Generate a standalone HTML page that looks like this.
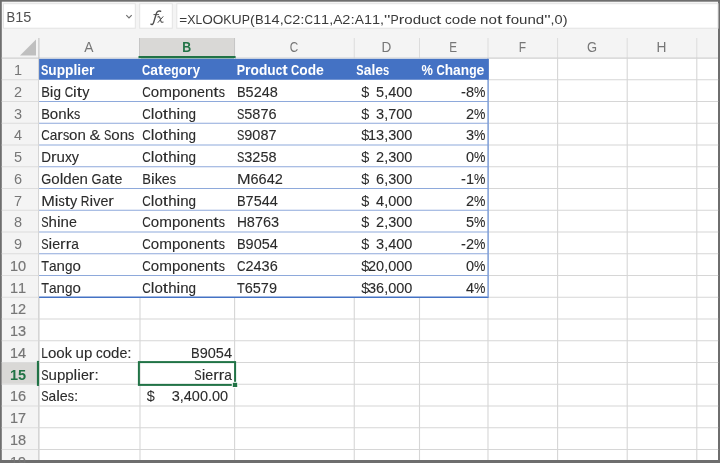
<!DOCTYPE html>
<html><head><meta charset="utf-8"><style>
html,body{margin:0;padding:0;width:720px;height:463px;overflow:hidden;background:#6e6e6e;font-family:"Liberation Sans",sans-serif}
text{white-space:pre}
</style></head><body>
<svg width="720" height="463" viewBox="0 0 720 463" style="position:absolute;left:0;top:0;display:block;will-change:transform"><rect x="0" y="0" width="720" height="463" fill="#6e6e6e"/><rect x="1.8" y="1.7" width="716.2" height="458.3" fill="#f4f4f4"/><rect x="3.5" y="3.7" width="131.8" height="24.5" fill="#fff" stroke="#e3e3e3" stroke-width="1"/><rect x="139.7" y="3.7" width="32.60000000000002" height="24.5" fill="#fff" stroke="#e3e3e3" stroke-width="1"/><rect x="176.8" y="3.7" width="541.2" height="24.5" fill="#fff" stroke="#e3e3e3" stroke-width="1"/><path d="M126.3 15.2 L129 17.9 L131.7 15.2" fill="none" stroke="#707070" stroke-width="1.2"/><rect x="38.9" y="58.0" width="679.1" height="402.0" fill="#fff"/><line x1="140.0" y1="38" x2="140.0" y2="58.0" stroke="#dcdcdc" stroke-width="1"/><line x1="234.6" y1="38" x2="234.6" y2="58.0" stroke="#dcdcdc" stroke-width="1"/><line x1="354.25" y1="38" x2="354.25" y2="58.0" stroke="#dcdcdc" stroke-width="1"/><line x1="419.5" y1="38" x2="419.5" y2="58.0" stroke="#dcdcdc" stroke-width="1"/><line x1="488.0" y1="38" x2="488.0" y2="58.0" stroke="#dcdcdc" stroke-width="1"/><line x1="557.6" y1="38" x2="557.6" y2="58.0" stroke="#dcdcdc" stroke-width="1"/><line x1="627.2" y1="38" x2="627.2" y2="58.0" stroke="#dcdcdc" stroke-width="1"/><line x1="696.8" y1="38" x2="696.8" y2="58.0" stroke="#dcdcdc" stroke-width="1"/><rect x="139.0" y="38" width="96.0" height="20.0" fill="#d9d8d6"/><line x1="139.5" y1="38" x2="139.5" y2="58.0" stroke="#c6c6c6" stroke-width="1"/><line x1="234.5" y1="38" x2="234.5" y2="58.0" stroke="#c6c6c6" stroke-width="1"/><line x1="1.7" y1="58.1" x2="718" y2="58.1" stroke="#d0d0d0" stroke-width="1.1"/><rect x="138.5" y="56.0" width="97.1" height="2.6" fill="#217346"/><path d="M20 55.5 L36 55.5 L36 39.5 Z" fill="#bfbfbf"/><line x1="38.9" y1="38" x2="38.9" y2="460" stroke="#c4c4c4" stroke-width="1.1"/><line x1="1.7" y1="79.75" x2="38.4" y2="79.75" stroke="#dcdcdc" stroke-width="1"/><line x1="1.7" y1="101.5" x2="38.4" y2="101.5" stroke="#dcdcdc" stroke-width="1"/><line x1="1.7" y1="123.25" x2="38.4" y2="123.25" stroke="#dcdcdc" stroke-width="1"/><line x1="1.7" y1="145.0" x2="38.4" y2="145.0" stroke="#dcdcdc" stroke-width="1"/><line x1="1.7" y1="166.75" x2="38.4" y2="166.75" stroke="#dcdcdc" stroke-width="1"/><line x1="1.7" y1="188.5" x2="38.4" y2="188.5" stroke="#dcdcdc" stroke-width="1"/><line x1="1.7" y1="210.25" x2="38.4" y2="210.25" stroke="#dcdcdc" stroke-width="1"/><line x1="1.7" y1="232.0" x2="38.4" y2="232.0" stroke="#dcdcdc" stroke-width="1"/><line x1="1.7" y1="253.75" x2="38.4" y2="253.75" stroke="#dcdcdc" stroke-width="1"/><line x1="1.7" y1="275.5" x2="38.4" y2="275.5" stroke="#dcdcdc" stroke-width="1"/><line x1="1.7" y1="297.25" x2="38.4" y2="297.25" stroke="#dcdcdc" stroke-width="1"/><line x1="1.7" y1="319.0" x2="38.4" y2="319.0" stroke="#dcdcdc" stroke-width="1"/><line x1="1.7" y1="340.75" x2="38.4" y2="340.75" stroke="#dcdcdc" stroke-width="1"/><line x1="1.7" y1="362.5" x2="38.4" y2="362.5" stroke="#dcdcdc" stroke-width="1"/><line x1="1.7" y1="384.25" x2="38.4" y2="384.25" stroke="#dcdcdc" stroke-width="1"/><line x1="1.7" y1="406.0" x2="38.4" y2="406.0" stroke="#dcdcdc" stroke-width="1"/><line x1="1.7" y1="427.75" x2="38.4" y2="427.75" stroke="#dcdcdc" stroke-width="1"/><line x1="1.7" y1="449.5" x2="38.4" y2="449.5" stroke="#dcdcdc" stroke-width="1"/><line x1="1.7" y1="471.25" x2="38.4" y2="471.25" stroke="#dcdcdc" stroke-width="1"/><rect x="1.8" y="363.0" width="36.6" height="20.75" fill="#d9d8d6"/><rect x="36.9" y="360.9" width="2.2" height="25" fill="#217346"/><line x1="38.9" y1="79.75" x2="718.2" y2="79.75" stroke="#d6d6d6" stroke-width="1.1"/><line x1="38.9" y1="101.5" x2="718.2" y2="101.5" stroke="#d6d6d6" stroke-width="1.1"/><line x1="38.9" y1="123.25" x2="718.2" y2="123.25" stroke="#d6d6d6" stroke-width="1.1"/><line x1="38.9" y1="145.0" x2="718.2" y2="145.0" stroke="#d6d6d6" stroke-width="1.1"/><line x1="38.9" y1="166.75" x2="718.2" y2="166.75" stroke="#d6d6d6" stroke-width="1.1"/><line x1="38.9" y1="188.5" x2="718.2" y2="188.5" stroke="#d6d6d6" stroke-width="1.1"/><line x1="38.9" y1="210.25" x2="718.2" y2="210.25" stroke="#d6d6d6" stroke-width="1.1"/><line x1="38.9" y1="232.0" x2="718.2" y2="232.0" stroke="#d6d6d6" stroke-width="1.1"/><line x1="38.9" y1="253.75" x2="718.2" y2="253.75" stroke="#d6d6d6" stroke-width="1.1"/><line x1="38.9" y1="275.5" x2="718.2" y2="275.5" stroke="#d6d6d6" stroke-width="1.1"/><line x1="38.9" y1="297.25" x2="718.2" y2="297.25" stroke="#d6d6d6" stroke-width="1.1"/><line x1="38.9" y1="319.0" x2="718.2" y2="319.0" stroke="#d6d6d6" stroke-width="1.1"/><line x1="38.9" y1="340.75" x2="718.2" y2="340.75" stroke="#d6d6d6" stroke-width="1.1"/><line x1="38.9" y1="362.5" x2="718.2" y2="362.5" stroke="#d6d6d6" stroke-width="1.1"/><line x1="38.9" y1="384.25" x2="718.2" y2="384.25" stroke="#d6d6d6" stroke-width="1.1"/><line x1="38.9" y1="406.0" x2="718.2" y2="406.0" stroke="#d6d6d6" stroke-width="1.1"/><line x1="38.9" y1="427.75" x2="718.2" y2="427.75" stroke="#d6d6d6" stroke-width="1.1"/><line x1="38.9" y1="449.5" x2="718.2" y2="449.5" stroke="#d6d6d6" stroke-width="1.1"/><line x1="38.9" y1="471.25" x2="718.2" y2="471.25" stroke="#d6d6d6" stroke-width="1.1"/><line x1="140.0" y1="58.0" x2="140.0" y2="460" stroke="#d6d6d6" stroke-width="1.1"/><line x1="234.6" y1="58.0" x2="234.6" y2="460" stroke="#d6d6d6" stroke-width="1.1"/><line x1="354.25" y1="58.0" x2="354.25" y2="460" stroke="#d6d6d6" stroke-width="1.1"/><line x1="419.5" y1="58.0" x2="419.5" y2="460" stroke="#d6d6d6" stroke-width="1.1"/><line x1="488.0" y1="58.0" x2="488.0" y2="460" stroke="#d6d6d6" stroke-width="1.1"/><line x1="557.6" y1="58.0" x2="557.6" y2="460" stroke="#d6d6d6" stroke-width="1.1"/><line x1="627.2" y1="58.0" x2="627.2" y2="460" stroke="#d6d6d6" stroke-width="1.1"/><line x1="696.8" y1="58.0" x2="696.8" y2="460" stroke="#d6d6d6" stroke-width="1.1"/><rect x="39.1" y="58.6" width="448.90000000000003" height="238.65" fill="#fff"/><rect x="39.1" y="58.8" width="448.90000000000003" height="20.95" fill="#4472c4"/><line x1="39.1" y1="101.5" x2="488.0" y2="101.5" stroke="#8ea9db" stroke-width="1.1"/><line x1="39.1" y1="123.25" x2="488.0" y2="123.25" stroke="#8ea9db" stroke-width="1.1"/><line x1="39.1" y1="145.0" x2="488.0" y2="145.0" stroke="#8ea9db" stroke-width="1.1"/><line x1="39.1" y1="166.75" x2="488.0" y2="166.75" stroke="#8ea9db" stroke-width="1.1"/><line x1="39.1" y1="188.5" x2="488.0" y2="188.5" stroke="#8ea9db" stroke-width="1.1"/><line x1="39.1" y1="210.25" x2="488.0" y2="210.25" stroke="#8ea9db" stroke-width="1.1"/><line x1="39.1" y1="232.0" x2="488.0" y2="232.0" stroke="#8ea9db" stroke-width="1.1"/><line x1="39.1" y1="253.75" x2="488.0" y2="253.75" stroke="#8ea9db" stroke-width="1.1"/><line x1="39.1" y1="275.5" x2="488.0" y2="275.5" stroke="#8ea9db" stroke-width="1.1"/><line x1="39.1" y1="297.25" x2="488.6" y2="297.25" stroke="#4472c4" stroke-width="1.3"/><line x1="488.1" y1="79.75" x2="488.1" y2="297.25" stroke="#7f9fd8" stroke-width="1.5"/><rect x="487.0" y="58.8" width="1.85" height="20.95" fill="#4472c4"/><rect x="138.9" y="362.1" width="96.19999999999999" height="22.799999999999955" fill="none" stroke="#217346" stroke-width="2"/><rect x="231.8" y="381.8" width="6.4" height="6.2" fill="#fff"/><rect x="232.8" y="382.8" width="4.4" height="4.2" fill="#217346"/><g font-family="Liberation Sans" font-size="14.4" font-weight="700" fill="#fff"><text x="41.00" y="74.85" textLength="7.37" lengthAdjust="spacingAndGlyphs">S</text><text x="48.37" y="74.85" textLength="8.37" lengthAdjust="spacingAndGlyphs">u</text><text x="56.74" y="74.85" textLength="8.37" lengthAdjust="spacingAndGlyphs">p</text><text x="65.11" y="74.85" textLength="8.37" lengthAdjust="spacingAndGlyphs">p</text><text x="73.47" y="74.85" textLength="3.83" lengthAdjust="spacingAndGlyphs">l</text><text x="77.30" y="74.85" textLength="3.83" lengthAdjust="spacingAndGlyphs">i</text><text x="81.13" y="74.85" textLength="7.85" lengthAdjust="spacingAndGlyphs">e</text><text x="88.98" y="74.85" textLength="5.54" lengthAdjust="spacingAndGlyphs">r</text></g><g font-family="Liberation Sans" font-size="14.4" font-weight="700" fill="#fff"><text x="142.10" y="74.85" textLength="8.25" lengthAdjust="spacingAndGlyphs">C</text><text x="150.35" y="74.85" textLength="7.70" lengthAdjust="spacingAndGlyphs">a</text><text x="158.05" y="74.85" textLength="5.41" lengthAdjust="spacingAndGlyphs">t</text><text x="163.46" y="74.85" textLength="7.85" lengthAdjust="spacingAndGlyphs">e</text><text x="171.31" y="74.85" textLength="7.39" lengthAdjust="spacingAndGlyphs">g</text><text x="178.70" y="74.85" textLength="8.38" lengthAdjust="spacingAndGlyphs">o</text><text x="187.08" y="74.85" textLength="5.54" lengthAdjust="spacingAndGlyphs">r</text><text x="192.63" y="74.85" textLength="7.39" lengthAdjust="spacingAndGlyphs">y</text></g><g font-family="Liberation Sans" font-size="14.4" font-weight="700" fill="#fff"><text x="236.70" y="74.85" textLength="8.30" lengthAdjust="spacingAndGlyphs">P</text><text x="245.00" y="74.85" textLength="5.54" lengthAdjust="spacingAndGlyphs">r</text><text x="250.54" y="74.85" textLength="8.38" lengthAdjust="spacingAndGlyphs">o</text><text x="258.93" y="74.85" textLength="8.37" lengthAdjust="spacingAndGlyphs">d</text><text x="267.29" y="74.85" textLength="8.37" lengthAdjust="spacingAndGlyphs">u</text><text x="275.66" y="74.85" textLength="6.53" lengthAdjust="spacingAndGlyphs">c</text><text x="282.19" y="74.85" textLength="5.41" lengthAdjust="spacingAndGlyphs">t</text><text x="291.12" y="74.85" textLength="8.25" lengthAdjust="spacingAndGlyphs">C</text><text x="299.37" y="74.85" textLength="8.38" lengthAdjust="spacingAndGlyphs">o</text><text x="307.76" y="74.85" textLength="8.37" lengthAdjust="spacingAndGlyphs">d</text><text x="316.12" y="74.85" textLength="7.85" lengthAdjust="spacingAndGlyphs">e</text></g><g font-family="Liberation Sans" font-size="14.4" font-weight="700" fill="#fff"><text x="356.35" y="74.85" textLength="7.37" lengthAdjust="spacingAndGlyphs">S</text><text x="363.72" y="74.85" textLength="7.70" lengthAdjust="spacingAndGlyphs">a</text><text x="371.42" y="74.85" textLength="3.83" lengthAdjust="spacingAndGlyphs">l</text><text x="375.25" y="74.85" textLength="7.85" lengthAdjust="spacingAndGlyphs">e</text><text x="383.10" y="74.85" textLength="6.22" lengthAdjust="spacingAndGlyphs">s</text></g><g font-family="Liberation Sans" font-size="14.4" font-weight="700" fill="#fff"><text x="421.60" y="74.85" textLength="11.37" lengthAdjust="spacingAndGlyphs">%</text><text x="436.49" y="74.85" textLength="8.25" lengthAdjust="spacingAndGlyphs">C</text><text x="444.75" y="74.85" textLength="8.37" lengthAdjust="spacingAndGlyphs">h</text><text x="453.11" y="74.85" textLength="7.70" lengthAdjust="spacingAndGlyphs">a</text><text x="460.81" y="74.85" textLength="8.37" lengthAdjust="spacingAndGlyphs">n</text><text x="469.18" y="74.85" textLength="7.39" lengthAdjust="spacingAndGlyphs">g</text><text x="476.57" y="74.85" textLength="7.85" lengthAdjust="spacingAndGlyphs">e</text></g><g font-family="Liberation Sans" font-size="14.6" font-weight="400" fill="#2b2b2b" stroke="#2b2b2b" stroke-width="0.1"><text x="41.20" y="96.80" textLength="8.67" lengthAdjust="spacingAndGlyphs">B</text><text x="49.87" y="96.80" textLength="3.66" lengthAdjust="spacingAndGlyphs">i</text><text x="53.53" y="96.80" textLength="7.50" lengthAdjust="spacingAndGlyphs">g</text><text x="64.63" y="96.80" textLength="8.50" lengthAdjust="spacingAndGlyphs">C</text><text x="73.13" y="96.80" textLength="3.66" lengthAdjust="spacingAndGlyphs">i</text><text x="76.79" y="96.80" textLength="5.34" lengthAdjust="spacingAndGlyphs">t</text><text x="82.13" y="96.80" textLength="7.21" lengthAdjust="spacingAndGlyphs">y</text></g><g font-family="Liberation Sans" font-size="14.6" font-weight="400" fill="#2b2b2b" stroke="#2b2b2b" stroke-width="0.1"><text x="142.30" y="96.80" textLength="8.50" lengthAdjust="spacingAndGlyphs">C</text><text x="150.80" y="96.80" textLength="8.40" lengthAdjust="spacingAndGlyphs">o</text><text x="159.20" y="96.80" textLength="12.73" lengthAdjust="spacingAndGlyphs">m</text><text x="171.93" y="96.80" textLength="8.37" lengthAdjust="spacingAndGlyphs">p</text><text x="180.31" y="96.80" textLength="8.40" lengthAdjust="spacingAndGlyphs">o</text><text x="188.71" y="96.80" textLength="8.37" lengthAdjust="spacingAndGlyphs">n</text><text x="197.09" y="96.80" textLength="7.93" lengthAdjust="spacingAndGlyphs">e</text><text x="205.01" y="96.80" textLength="8.37" lengthAdjust="spacingAndGlyphs">n</text><text x="213.39" y="96.80" textLength="5.34" lengthAdjust="spacingAndGlyphs">t</text><text x="218.73" y="96.80" textLength="6.23" lengthAdjust="spacingAndGlyphs">s</text></g><g font-family="Liberation Sans" font-size="14.6" font-weight="400" fill="#2b2b2b" stroke="#2b2b2b" stroke-width="0.1"><text x="236.90" y="96.80" textLength="8.67" lengthAdjust="spacingAndGlyphs">B</text><text x="245.57" y="96.80" textLength="8.08" lengthAdjust="spacingAndGlyphs">5</text><text x="253.65" y="96.80" textLength="8.08" lengthAdjust="spacingAndGlyphs">2</text><text x="261.72" y="96.80" textLength="8.08" lengthAdjust="spacingAndGlyphs">4</text><text x="269.80" y="96.80" textLength="8.08" lengthAdjust="spacingAndGlyphs">8</text></g><text x="361.25" y="96.80" font-family="Liberation Sans" font-size="14.6" font-weight="400" fill="#2b2b2b" text-anchor="start" textLength="8.08" lengthAdjust="spacingAndGlyphs">$</text><g font-family="Liberation Sans" font-size="14.6" font-weight="400" fill="#2b2b2b" stroke="#2b2b2b" stroke-width="0.1"><text x="376.11" y="96.80" textLength="8.08" lengthAdjust="spacingAndGlyphs">5</text><text x="384.19" y="96.80" textLength="3.98" lengthAdjust="spacingAndGlyphs">,</text><text x="388.17" y="96.80" textLength="8.08" lengthAdjust="spacingAndGlyphs">4</text><text x="396.24" y="96.80" textLength="8.08" lengthAdjust="spacingAndGlyphs">0</text><text x="404.32" y="96.80" textLength="8.08" lengthAdjust="spacingAndGlyphs">0</text></g><g font-family="Liberation Sans" font-size="14.6" font-weight="400" fill="#2b2b2b" stroke="#2b2b2b" stroke-width="0.1"><text x="461.05" y="96.80" textLength="4.88" lengthAdjust="spacingAndGlyphs">-</text><text x="465.93" y="96.80" textLength="8.08" lengthAdjust="spacingAndGlyphs">8</text><text x="474.01" y="96.80" textLength="11.39" lengthAdjust="spacingAndGlyphs">%</text></g><g font-family="Liberation Sans" font-size="14.6" font-weight="400" fill="#2b2b2b" stroke="#2b2b2b" stroke-width="0.1"><text x="41.20" y="118.55" textLength="8.67" lengthAdjust="spacingAndGlyphs">B</text><text x="49.87" y="118.55" textLength="8.40" lengthAdjust="spacingAndGlyphs">o</text><text x="58.27" y="118.55" textLength="8.37" lengthAdjust="spacingAndGlyphs">n</text><text x="66.65" y="118.55" textLength="7.25" lengthAdjust="spacingAndGlyphs">k</text><text x="73.89" y="118.55" textLength="6.23" lengthAdjust="spacingAndGlyphs">s</text></g><g font-family="Liberation Sans" font-size="14.6" font-weight="400" fill="#2b2b2b" stroke="#2b2b2b" stroke-width="0.1"><text x="142.30" y="118.55" textLength="8.50" lengthAdjust="spacingAndGlyphs">C</text><text x="150.80" y="118.55" textLength="3.66" lengthAdjust="spacingAndGlyphs">l</text><text x="154.46" y="118.55" textLength="8.40" lengthAdjust="spacingAndGlyphs">o</text><text x="162.86" y="118.55" textLength="5.34" lengthAdjust="spacingAndGlyphs">t</text><text x="168.20" y="118.55" textLength="8.37" lengthAdjust="spacingAndGlyphs">h</text><text x="176.57" y="118.55" textLength="3.66" lengthAdjust="spacingAndGlyphs">i</text><text x="180.23" y="118.55" textLength="8.37" lengthAdjust="spacingAndGlyphs">n</text><text x="188.60" y="118.55" textLength="7.50" lengthAdjust="spacingAndGlyphs">g</text></g><g font-family="Liberation Sans" font-size="14.6" font-weight="400" fill="#2b2b2b" stroke="#2b2b2b" stroke-width="0.1"><text x="236.90" y="118.55" textLength="7.32" lengthAdjust="spacingAndGlyphs">S</text><text x="244.22" y="118.55" textLength="8.08" lengthAdjust="spacingAndGlyphs">5</text><text x="252.30" y="118.55" textLength="8.08" lengthAdjust="spacingAndGlyphs">8</text><text x="260.38" y="118.55" textLength="8.08" lengthAdjust="spacingAndGlyphs">7</text><text x="268.46" y="118.55" textLength="8.08" lengthAdjust="spacingAndGlyphs">6</text></g><text x="361.25" y="118.55" font-family="Liberation Sans" font-size="14.6" font-weight="400" fill="#2b2b2b" text-anchor="start" textLength="8.08" lengthAdjust="spacingAndGlyphs">$</text><g font-family="Liberation Sans" font-size="14.6" font-weight="400" fill="#2b2b2b" stroke="#2b2b2b" stroke-width="0.1"><text x="376.11" y="118.55" textLength="8.08" lengthAdjust="spacingAndGlyphs">3</text><text x="384.19" y="118.55" textLength="3.98" lengthAdjust="spacingAndGlyphs">,</text><text x="388.17" y="118.55" textLength="8.08" lengthAdjust="spacingAndGlyphs">7</text><text x="396.24" y="118.55" textLength="8.08" lengthAdjust="spacingAndGlyphs">0</text><text x="404.32" y="118.55" textLength="8.08" lengthAdjust="spacingAndGlyphs">0</text></g><g font-family="Liberation Sans" font-size="14.6" font-weight="400" fill="#2b2b2b" stroke="#2b2b2b" stroke-width="0.1"><text x="465.93" y="118.55" textLength="8.08" lengthAdjust="spacingAndGlyphs">2</text><text x="474.01" y="118.55" textLength="11.39" lengthAdjust="spacingAndGlyphs">%</text></g><g font-family="Liberation Sans" font-size="14.6" font-weight="400" fill="#2b2b2b" stroke="#2b2b2b" stroke-width="0.1"><text x="41.20" y="140.30" textLength="8.50" lengthAdjust="spacingAndGlyphs">C</text><text x="49.70" y="140.30" textLength="7.63" lengthAdjust="spacingAndGlyphs">a</text><text x="57.33" y="140.30" textLength="5.56" lengthAdjust="spacingAndGlyphs">r</text><text x="62.89" y="140.30" textLength="6.23" lengthAdjust="spacingAndGlyphs">s</text><text x="69.12" y="140.30" textLength="8.40" lengthAdjust="spacingAndGlyphs">o</text><text x="77.53" y="140.30" textLength="8.37" lengthAdjust="spacingAndGlyphs">n</text><text x="89.50" y="140.30" textLength="10.87" lengthAdjust="spacingAndGlyphs">&amp;</text><text x="103.98" y="140.30" textLength="7.32" lengthAdjust="spacingAndGlyphs">S</text><text x="111.30" y="140.30" textLength="8.40" lengthAdjust="spacingAndGlyphs">o</text><text x="119.70" y="140.30" textLength="8.37" lengthAdjust="spacingAndGlyphs">n</text><text x="128.08" y="140.30" textLength="6.23" lengthAdjust="spacingAndGlyphs">s</text></g><g font-family="Liberation Sans" font-size="14.6" font-weight="400" fill="#2b2b2b" stroke="#2b2b2b" stroke-width="0.1"><text x="142.30" y="140.30" textLength="8.50" lengthAdjust="spacingAndGlyphs">C</text><text x="150.80" y="140.30" textLength="3.66" lengthAdjust="spacingAndGlyphs">l</text><text x="154.46" y="140.30" textLength="8.40" lengthAdjust="spacingAndGlyphs">o</text><text x="162.86" y="140.30" textLength="5.34" lengthAdjust="spacingAndGlyphs">t</text><text x="168.20" y="140.30" textLength="8.37" lengthAdjust="spacingAndGlyphs">h</text><text x="176.57" y="140.30" textLength="3.66" lengthAdjust="spacingAndGlyphs">i</text><text x="180.23" y="140.30" textLength="8.37" lengthAdjust="spacingAndGlyphs">n</text><text x="188.60" y="140.30" textLength="7.50" lengthAdjust="spacingAndGlyphs">g</text></g><g font-family="Liberation Sans" font-size="14.6" font-weight="400" fill="#2b2b2b" stroke="#2b2b2b" stroke-width="0.1"><text x="236.90" y="140.30" textLength="7.32" lengthAdjust="spacingAndGlyphs">S</text><text x="244.22" y="140.30" textLength="8.08" lengthAdjust="spacingAndGlyphs">9</text><text x="252.30" y="140.30" textLength="8.08" lengthAdjust="spacingAndGlyphs">0</text><text x="260.38" y="140.30" textLength="8.08" lengthAdjust="spacingAndGlyphs">8</text><text x="268.46" y="140.30" textLength="8.08" lengthAdjust="spacingAndGlyphs">7</text></g><text x="361.25" y="140.30" font-family="Liberation Sans" font-size="14.6" font-weight="400" fill="#2b2b2b" text-anchor="start" textLength="8.08" lengthAdjust="spacingAndGlyphs">$</text><g font-family="Liberation Sans" font-size="14.6" font-weight="400" fill="#2b2b2b" stroke="#2b2b2b" stroke-width="0.1"><text x="368.03" y="140.30" textLength="8.08" lengthAdjust="spacingAndGlyphs">1</text><text x="376.11" y="140.30" textLength="8.08" lengthAdjust="spacingAndGlyphs">3</text><text x="384.19" y="140.30" textLength="3.98" lengthAdjust="spacingAndGlyphs">,</text><text x="388.17" y="140.30" textLength="8.08" lengthAdjust="spacingAndGlyphs">3</text><text x="396.24" y="140.30" textLength="8.08" lengthAdjust="spacingAndGlyphs">0</text><text x="404.32" y="140.30" textLength="8.08" lengthAdjust="spacingAndGlyphs">0</text></g><g font-family="Liberation Sans" font-size="14.6" font-weight="400" fill="#2b2b2b" stroke="#2b2b2b" stroke-width="0.1"><text x="465.93" y="140.30" textLength="8.08" lengthAdjust="spacingAndGlyphs">3</text><text x="474.01" y="140.30" textLength="11.39" lengthAdjust="spacingAndGlyphs">%</text></g><g font-family="Liberation Sans" font-size="14.6" font-weight="400" fill="#2b2b2b" stroke="#2b2b2b" stroke-width="0.1"><text x="41.20" y="162.05" textLength="9.81" lengthAdjust="spacingAndGlyphs">D</text><text x="51.01" y="162.05" textLength="5.56" lengthAdjust="spacingAndGlyphs">r</text><text x="56.56" y="162.05" textLength="8.37" lengthAdjust="spacingAndGlyphs">u</text><text x="64.94" y="162.05" textLength="6.90" lengthAdjust="spacingAndGlyphs">x</text><text x="71.84" y="162.05" textLength="7.21" lengthAdjust="spacingAndGlyphs">y</text></g><g font-family="Liberation Sans" font-size="14.6" font-weight="400" fill="#2b2b2b" stroke="#2b2b2b" stroke-width="0.1"><text x="142.30" y="162.05" textLength="8.50" lengthAdjust="spacingAndGlyphs">C</text><text x="150.80" y="162.05" textLength="3.66" lengthAdjust="spacingAndGlyphs">l</text><text x="154.46" y="162.05" textLength="8.40" lengthAdjust="spacingAndGlyphs">o</text><text x="162.86" y="162.05" textLength="5.34" lengthAdjust="spacingAndGlyphs">t</text><text x="168.20" y="162.05" textLength="8.37" lengthAdjust="spacingAndGlyphs">h</text><text x="176.57" y="162.05" textLength="3.66" lengthAdjust="spacingAndGlyphs">i</text><text x="180.23" y="162.05" textLength="8.37" lengthAdjust="spacingAndGlyphs">n</text><text x="188.60" y="162.05" textLength="7.50" lengthAdjust="spacingAndGlyphs">g</text></g><g font-family="Liberation Sans" font-size="14.6" font-weight="400" fill="#2b2b2b" stroke="#2b2b2b" stroke-width="0.1"><text x="236.90" y="162.05" textLength="7.32" lengthAdjust="spacingAndGlyphs">S</text><text x="244.22" y="162.05" textLength="8.08" lengthAdjust="spacingAndGlyphs">3</text><text x="252.30" y="162.05" textLength="8.08" lengthAdjust="spacingAndGlyphs">2</text><text x="260.38" y="162.05" textLength="8.08" lengthAdjust="spacingAndGlyphs">5</text><text x="268.46" y="162.05" textLength="8.08" lengthAdjust="spacingAndGlyphs">8</text></g><text x="361.25" y="162.05" font-family="Liberation Sans" font-size="14.6" font-weight="400" fill="#2b2b2b" text-anchor="start" textLength="8.08" lengthAdjust="spacingAndGlyphs">$</text><g font-family="Liberation Sans" font-size="14.6" font-weight="400" fill="#2b2b2b" stroke="#2b2b2b" stroke-width="0.1"><text x="376.11" y="162.05" textLength="8.08" lengthAdjust="spacingAndGlyphs">2</text><text x="384.19" y="162.05" textLength="3.98" lengthAdjust="spacingAndGlyphs">,</text><text x="388.17" y="162.05" textLength="8.08" lengthAdjust="spacingAndGlyphs">3</text><text x="396.24" y="162.05" textLength="8.08" lengthAdjust="spacingAndGlyphs">0</text><text x="404.32" y="162.05" textLength="8.08" lengthAdjust="spacingAndGlyphs">0</text></g><g font-family="Liberation Sans" font-size="14.6" font-weight="400" fill="#2b2b2b" stroke="#2b2b2b" stroke-width="0.1"><text x="465.93" y="162.05" textLength="8.08" lengthAdjust="spacingAndGlyphs">0</text><text x="474.01" y="162.05" textLength="11.39" lengthAdjust="spacingAndGlyphs">%</text></g><g font-family="Liberation Sans" font-size="14.6" font-weight="400" fill="#2b2b2b" stroke="#2b2b2b" stroke-width="0.1"><text x="41.20" y="183.80" textLength="10.05" lengthAdjust="spacingAndGlyphs">G</text><text x="51.25" y="183.80" textLength="8.40" lengthAdjust="spacingAndGlyphs">o</text><text x="59.66" y="183.80" textLength="3.66" lengthAdjust="spacingAndGlyphs">l</text><text x="63.32" y="183.80" textLength="8.37" lengthAdjust="spacingAndGlyphs">d</text><text x="71.69" y="183.80" textLength="7.93" lengthAdjust="spacingAndGlyphs">e</text><text x="79.62" y="183.80" textLength="8.37" lengthAdjust="spacingAndGlyphs">n</text><text x="91.60" y="183.80" textLength="10.05" lengthAdjust="spacingAndGlyphs">G</text><text x="101.65" y="183.80" textLength="7.63" lengthAdjust="spacingAndGlyphs">a</text><text x="109.28" y="183.80" textLength="5.34" lengthAdjust="spacingAndGlyphs">t</text><text x="114.62" y="183.80" textLength="7.93" lengthAdjust="spacingAndGlyphs">e</text></g><g font-family="Liberation Sans" font-size="14.6" font-weight="400" fill="#2b2b2b" stroke="#2b2b2b" stroke-width="0.1"><text x="142.30" y="183.80" textLength="8.67" lengthAdjust="spacingAndGlyphs">B</text><text x="150.97" y="183.80" textLength="3.66" lengthAdjust="spacingAndGlyphs">i</text><text x="154.63" y="183.80" textLength="7.25" lengthAdjust="spacingAndGlyphs">k</text><text x="161.87" y="183.80" textLength="7.93" lengthAdjust="spacingAndGlyphs">e</text><text x="169.80" y="183.80" textLength="6.23" lengthAdjust="spacingAndGlyphs">s</text></g><g font-family="Liberation Sans" font-size="14.6" font-weight="400" fill="#2b2b2b" stroke="#2b2b2b" stroke-width="0.1"><text x="236.90" y="183.80" textLength="13.63" lengthAdjust="spacingAndGlyphs">M</text><text x="250.53" y="183.80" textLength="8.08" lengthAdjust="spacingAndGlyphs">6</text><text x="258.60" y="183.80" textLength="8.08" lengthAdjust="spacingAndGlyphs">6</text><text x="266.68" y="183.80" textLength="8.08" lengthAdjust="spacingAndGlyphs">4</text><text x="274.76" y="183.80" textLength="8.08" lengthAdjust="spacingAndGlyphs">2</text></g><text x="361.25" y="183.80" font-family="Liberation Sans" font-size="14.6" font-weight="400" fill="#2b2b2b" text-anchor="start" textLength="8.08" lengthAdjust="spacingAndGlyphs">$</text><g font-family="Liberation Sans" font-size="14.6" font-weight="400" fill="#2b2b2b" stroke="#2b2b2b" stroke-width="0.1"><text x="376.11" y="183.80" textLength="8.08" lengthAdjust="spacingAndGlyphs">6</text><text x="384.19" y="183.80" textLength="3.98" lengthAdjust="spacingAndGlyphs">,</text><text x="388.17" y="183.80" textLength="8.08" lengthAdjust="spacingAndGlyphs">3</text><text x="396.24" y="183.80" textLength="8.08" lengthAdjust="spacingAndGlyphs">0</text><text x="404.32" y="183.80" textLength="8.08" lengthAdjust="spacingAndGlyphs">0</text></g><g font-family="Liberation Sans" font-size="14.6" font-weight="400" fill="#2b2b2b" stroke="#2b2b2b" stroke-width="0.1"><text x="461.05" y="183.80" textLength="4.88" lengthAdjust="spacingAndGlyphs">-</text><text x="465.93" y="183.80" textLength="8.08" lengthAdjust="spacingAndGlyphs">1</text><text x="474.01" y="183.80" textLength="11.39" lengthAdjust="spacingAndGlyphs">%</text></g><g font-family="Liberation Sans" font-size="14.6" font-weight="400" fill="#2b2b2b" stroke="#2b2b2b" stroke-width="0.1"><text x="41.20" y="205.55" textLength="13.63" lengthAdjust="spacingAndGlyphs">M</text><text x="54.83" y="205.55" textLength="3.66" lengthAdjust="spacingAndGlyphs">i</text><text x="58.48" y="205.55" textLength="6.23" lengthAdjust="spacingAndGlyphs">s</text><text x="64.72" y="205.55" textLength="5.34" lengthAdjust="spacingAndGlyphs">t</text><text x="70.06" y="205.55" textLength="7.21" lengthAdjust="spacingAndGlyphs">y</text><text x="80.87" y="205.55" textLength="8.65" lengthAdjust="spacingAndGlyphs">R</text><text x="89.53" y="205.55" textLength="3.66" lengthAdjust="spacingAndGlyphs">i</text><text x="93.18" y="205.55" textLength="7.20" lengthAdjust="spacingAndGlyphs">v</text><text x="100.38" y="205.55" textLength="7.93" lengthAdjust="spacingAndGlyphs">e</text><text x="108.31" y="205.55" textLength="5.56" lengthAdjust="spacingAndGlyphs">r</text></g><g font-family="Liberation Sans" font-size="14.6" font-weight="400" fill="#2b2b2b" stroke="#2b2b2b" stroke-width="0.1"><text x="142.30" y="205.55" textLength="8.50" lengthAdjust="spacingAndGlyphs">C</text><text x="150.80" y="205.55" textLength="3.66" lengthAdjust="spacingAndGlyphs">l</text><text x="154.46" y="205.55" textLength="8.40" lengthAdjust="spacingAndGlyphs">o</text><text x="162.86" y="205.55" textLength="5.34" lengthAdjust="spacingAndGlyphs">t</text><text x="168.20" y="205.55" textLength="8.37" lengthAdjust="spacingAndGlyphs">h</text><text x="176.57" y="205.55" textLength="3.66" lengthAdjust="spacingAndGlyphs">i</text><text x="180.23" y="205.55" textLength="8.37" lengthAdjust="spacingAndGlyphs">n</text><text x="188.60" y="205.55" textLength="7.50" lengthAdjust="spacingAndGlyphs">g</text></g><g font-family="Liberation Sans" font-size="14.6" font-weight="400" fill="#2b2b2b" stroke="#2b2b2b" stroke-width="0.1"><text x="236.90" y="205.55" textLength="8.67" lengthAdjust="spacingAndGlyphs">B</text><text x="245.57" y="205.55" textLength="8.08" lengthAdjust="spacingAndGlyphs">7</text><text x="253.65" y="205.55" textLength="8.08" lengthAdjust="spacingAndGlyphs">5</text><text x="261.72" y="205.55" textLength="8.08" lengthAdjust="spacingAndGlyphs">4</text><text x="269.80" y="205.55" textLength="8.08" lengthAdjust="spacingAndGlyphs">4</text></g><text x="361.25" y="205.55" font-family="Liberation Sans" font-size="14.6" font-weight="400" fill="#2b2b2b" text-anchor="start" textLength="8.08" lengthAdjust="spacingAndGlyphs">$</text><g font-family="Liberation Sans" font-size="14.6" font-weight="400" fill="#2b2b2b" stroke="#2b2b2b" stroke-width="0.1"><text x="376.11" y="205.55" textLength="8.08" lengthAdjust="spacingAndGlyphs">4</text><text x="384.19" y="205.55" textLength="3.98" lengthAdjust="spacingAndGlyphs">,</text><text x="388.17" y="205.55" textLength="8.08" lengthAdjust="spacingAndGlyphs">0</text><text x="396.24" y="205.55" textLength="8.08" lengthAdjust="spacingAndGlyphs">0</text><text x="404.32" y="205.55" textLength="8.08" lengthAdjust="spacingAndGlyphs">0</text></g><g font-family="Liberation Sans" font-size="14.6" font-weight="400" fill="#2b2b2b" stroke="#2b2b2b" stroke-width="0.1"><text x="465.93" y="205.55" textLength="8.08" lengthAdjust="spacingAndGlyphs">2</text><text x="474.01" y="205.55" textLength="11.39" lengthAdjust="spacingAndGlyphs">%</text></g><g font-family="Liberation Sans" font-size="14.6" font-weight="400" fill="#2b2b2b" stroke="#2b2b2b" stroke-width="0.1"><text x="41.20" y="227.30" textLength="7.32" lengthAdjust="spacingAndGlyphs">S</text><text x="48.52" y="227.30" textLength="8.37" lengthAdjust="spacingAndGlyphs">h</text><text x="56.90" y="227.30" textLength="3.66" lengthAdjust="spacingAndGlyphs">i</text><text x="60.55" y="227.30" textLength="8.37" lengthAdjust="spacingAndGlyphs">n</text><text x="68.93" y="227.30" textLength="7.93" lengthAdjust="spacingAndGlyphs">e</text></g><g font-family="Liberation Sans" font-size="14.6" font-weight="400" fill="#2b2b2b" stroke="#2b2b2b" stroke-width="0.1"><text x="142.30" y="227.30" textLength="8.50" lengthAdjust="spacingAndGlyphs">C</text><text x="150.80" y="227.30" textLength="8.40" lengthAdjust="spacingAndGlyphs">o</text><text x="159.20" y="227.30" textLength="12.73" lengthAdjust="spacingAndGlyphs">m</text><text x="171.93" y="227.30" textLength="8.37" lengthAdjust="spacingAndGlyphs">p</text><text x="180.31" y="227.30" textLength="8.40" lengthAdjust="spacingAndGlyphs">o</text><text x="188.71" y="227.30" textLength="8.37" lengthAdjust="spacingAndGlyphs">n</text><text x="197.09" y="227.30" textLength="7.93" lengthAdjust="spacingAndGlyphs">e</text><text x="205.01" y="227.30" textLength="8.37" lengthAdjust="spacingAndGlyphs">n</text><text x="213.39" y="227.30" textLength="5.34" lengthAdjust="spacingAndGlyphs">t</text><text x="218.73" y="227.30" textLength="6.23" lengthAdjust="spacingAndGlyphs">s</text></g><g font-family="Liberation Sans" font-size="14.6" font-weight="400" fill="#2b2b2b" stroke="#2b2b2b" stroke-width="0.1"><text x="236.90" y="227.30" textLength="9.93" lengthAdjust="spacingAndGlyphs">H</text><text x="246.83" y="227.30" textLength="8.08" lengthAdjust="spacingAndGlyphs">8</text><text x="254.91" y="227.30" textLength="8.08" lengthAdjust="spacingAndGlyphs">7</text><text x="262.99" y="227.30" textLength="8.08" lengthAdjust="spacingAndGlyphs">6</text><text x="271.06" y="227.30" textLength="8.08" lengthAdjust="spacingAndGlyphs">3</text></g><text x="361.25" y="227.30" font-family="Liberation Sans" font-size="14.6" font-weight="400" fill="#2b2b2b" text-anchor="start" textLength="8.08" lengthAdjust="spacingAndGlyphs">$</text><g font-family="Liberation Sans" font-size="14.6" font-weight="400" fill="#2b2b2b" stroke="#2b2b2b" stroke-width="0.1"><text x="376.11" y="227.30" textLength="8.08" lengthAdjust="spacingAndGlyphs">2</text><text x="384.19" y="227.30" textLength="3.98" lengthAdjust="spacingAndGlyphs">,</text><text x="388.17" y="227.30" textLength="8.08" lengthAdjust="spacingAndGlyphs">3</text><text x="396.24" y="227.30" textLength="8.08" lengthAdjust="spacingAndGlyphs">0</text><text x="404.32" y="227.30" textLength="8.08" lengthAdjust="spacingAndGlyphs">0</text></g><g font-family="Liberation Sans" font-size="14.6" font-weight="400" fill="#2b2b2b" stroke="#2b2b2b" stroke-width="0.1"><text x="465.93" y="227.30" textLength="8.08" lengthAdjust="spacingAndGlyphs">5</text><text x="474.01" y="227.30" textLength="11.39" lengthAdjust="spacingAndGlyphs">%</text></g><g font-family="Liberation Sans" font-size="14.6" font-weight="400" fill="#2b2b2b" stroke="#2b2b2b" stroke-width="0.1"><text x="41.20" y="249.05" textLength="7.32" lengthAdjust="spacingAndGlyphs">S</text><text x="48.52" y="249.05" textLength="3.66" lengthAdjust="spacingAndGlyphs">i</text><text x="52.18" y="249.05" textLength="7.93" lengthAdjust="spacingAndGlyphs">e</text><text x="60.11" y="249.05" textLength="5.56" lengthAdjust="spacingAndGlyphs">r</text><text x="65.67" y="249.05" textLength="5.56" lengthAdjust="spacingAndGlyphs">r</text><text x="71.22" y="249.05" textLength="7.63" lengthAdjust="spacingAndGlyphs">a</text></g><g font-family="Liberation Sans" font-size="14.6" font-weight="400" fill="#2b2b2b" stroke="#2b2b2b" stroke-width="0.1"><text x="142.30" y="249.05" textLength="8.50" lengthAdjust="spacingAndGlyphs">C</text><text x="150.80" y="249.05" textLength="8.40" lengthAdjust="spacingAndGlyphs">o</text><text x="159.20" y="249.05" textLength="12.73" lengthAdjust="spacingAndGlyphs">m</text><text x="171.93" y="249.05" textLength="8.37" lengthAdjust="spacingAndGlyphs">p</text><text x="180.31" y="249.05" textLength="8.40" lengthAdjust="spacingAndGlyphs">o</text><text x="188.71" y="249.05" textLength="8.37" lengthAdjust="spacingAndGlyphs">n</text><text x="197.09" y="249.05" textLength="7.93" lengthAdjust="spacingAndGlyphs">e</text><text x="205.01" y="249.05" textLength="8.37" lengthAdjust="spacingAndGlyphs">n</text><text x="213.39" y="249.05" textLength="5.34" lengthAdjust="spacingAndGlyphs">t</text><text x="218.73" y="249.05" textLength="6.23" lengthAdjust="spacingAndGlyphs">s</text></g><g font-family="Liberation Sans" font-size="14.6" font-weight="400" fill="#2b2b2b" stroke="#2b2b2b" stroke-width="0.1"><text x="236.90" y="249.05" textLength="8.67" lengthAdjust="spacingAndGlyphs">B</text><text x="245.57" y="249.05" textLength="8.08" lengthAdjust="spacingAndGlyphs">9</text><text x="253.65" y="249.05" textLength="8.08" lengthAdjust="spacingAndGlyphs">0</text><text x="261.72" y="249.05" textLength="8.08" lengthAdjust="spacingAndGlyphs">5</text><text x="269.80" y="249.05" textLength="8.08" lengthAdjust="spacingAndGlyphs">4</text></g><text x="361.25" y="249.05" font-family="Liberation Sans" font-size="14.6" font-weight="400" fill="#2b2b2b" text-anchor="start" textLength="8.08" lengthAdjust="spacingAndGlyphs">$</text><g font-family="Liberation Sans" font-size="14.6" font-weight="400" fill="#2b2b2b" stroke="#2b2b2b" stroke-width="0.1"><text x="376.11" y="249.05" textLength="8.08" lengthAdjust="spacingAndGlyphs">3</text><text x="384.19" y="249.05" textLength="3.98" lengthAdjust="spacingAndGlyphs">,</text><text x="388.17" y="249.05" textLength="8.08" lengthAdjust="spacingAndGlyphs">4</text><text x="396.24" y="249.05" textLength="8.08" lengthAdjust="spacingAndGlyphs">0</text><text x="404.32" y="249.05" textLength="8.08" lengthAdjust="spacingAndGlyphs">0</text></g><g font-family="Liberation Sans" font-size="14.6" font-weight="400" fill="#2b2b2b" stroke="#2b2b2b" stroke-width="0.1"><text x="461.05" y="249.05" textLength="4.88" lengthAdjust="spacingAndGlyphs">-</text><text x="465.93" y="249.05" textLength="8.08" lengthAdjust="spacingAndGlyphs">2</text><text x="474.01" y="249.05" textLength="11.39" lengthAdjust="spacingAndGlyphs">%</text></g><g font-family="Liberation Sans" font-size="14.6" font-weight="400" fill="#2b2b2b" stroke="#2b2b2b" stroke-width="0.1"><text x="41.20" y="270.80" textLength="7.77" lengthAdjust="spacingAndGlyphs">T</text><text x="48.97" y="270.80" textLength="7.63" lengthAdjust="spacingAndGlyphs">a</text><text x="56.60" y="270.80" textLength="8.37" lengthAdjust="spacingAndGlyphs">n</text><text x="64.97" y="270.80" textLength="7.50" lengthAdjust="spacingAndGlyphs">g</text><text x="72.48" y="270.80" textLength="8.40" lengthAdjust="spacingAndGlyphs">o</text></g><g font-family="Liberation Sans" font-size="14.6" font-weight="400" fill="#2b2b2b" stroke="#2b2b2b" stroke-width="0.1"><text x="142.30" y="270.80" textLength="8.50" lengthAdjust="spacingAndGlyphs">C</text><text x="150.80" y="270.80" textLength="8.40" lengthAdjust="spacingAndGlyphs">o</text><text x="159.20" y="270.80" textLength="12.73" lengthAdjust="spacingAndGlyphs">m</text><text x="171.93" y="270.80" textLength="8.37" lengthAdjust="spacingAndGlyphs">p</text><text x="180.31" y="270.80" textLength="8.40" lengthAdjust="spacingAndGlyphs">o</text><text x="188.71" y="270.80" textLength="8.37" lengthAdjust="spacingAndGlyphs">n</text><text x="197.09" y="270.80" textLength="7.93" lengthAdjust="spacingAndGlyphs">e</text><text x="205.01" y="270.80" textLength="8.37" lengthAdjust="spacingAndGlyphs">n</text><text x="213.39" y="270.80" textLength="5.34" lengthAdjust="spacingAndGlyphs">t</text><text x="218.73" y="270.80" textLength="6.23" lengthAdjust="spacingAndGlyphs">s</text></g><g font-family="Liberation Sans" font-size="14.6" font-weight="400" fill="#2b2b2b" stroke="#2b2b2b" stroke-width="0.1"><text x="236.90" y="270.80" textLength="8.50" lengthAdjust="spacingAndGlyphs">C</text><text x="245.40" y="270.80" textLength="8.08" lengthAdjust="spacingAndGlyphs">2</text><text x="253.48" y="270.80" textLength="8.08" lengthAdjust="spacingAndGlyphs">4</text><text x="261.55" y="270.80" textLength="8.08" lengthAdjust="spacingAndGlyphs">3</text><text x="269.63" y="270.80" textLength="8.08" lengthAdjust="spacingAndGlyphs">6</text></g><text x="361.25" y="270.80" font-family="Liberation Sans" font-size="14.6" font-weight="400" fill="#2b2b2b" text-anchor="start" textLength="8.08" lengthAdjust="spacingAndGlyphs">$</text><g font-family="Liberation Sans" font-size="14.6" font-weight="400" fill="#2b2b2b" stroke="#2b2b2b" stroke-width="0.1"><text x="368.03" y="270.80" textLength="8.08" lengthAdjust="spacingAndGlyphs">2</text><text x="376.11" y="270.80" textLength="8.08" lengthAdjust="spacingAndGlyphs">0</text><text x="384.19" y="270.80" textLength="3.98" lengthAdjust="spacingAndGlyphs">,</text><text x="388.17" y="270.80" textLength="8.08" lengthAdjust="spacingAndGlyphs">0</text><text x="396.24" y="270.80" textLength="8.08" lengthAdjust="spacingAndGlyphs">0</text><text x="404.32" y="270.80" textLength="8.08" lengthAdjust="spacingAndGlyphs">0</text></g><g font-family="Liberation Sans" font-size="14.6" font-weight="400" fill="#2b2b2b" stroke="#2b2b2b" stroke-width="0.1"><text x="465.93" y="270.80" textLength="8.08" lengthAdjust="spacingAndGlyphs">0</text><text x="474.01" y="270.80" textLength="11.39" lengthAdjust="spacingAndGlyphs">%</text></g><g font-family="Liberation Sans" font-size="14.6" font-weight="400" fill="#2b2b2b" stroke="#2b2b2b" stroke-width="0.1"><text x="41.20" y="292.55" textLength="7.77" lengthAdjust="spacingAndGlyphs">T</text><text x="48.97" y="292.55" textLength="7.63" lengthAdjust="spacingAndGlyphs">a</text><text x="56.60" y="292.55" textLength="8.37" lengthAdjust="spacingAndGlyphs">n</text><text x="64.97" y="292.55" textLength="7.50" lengthAdjust="spacingAndGlyphs">g</text><text x="72.48" y="292.55" textLength="8.40" lengthAdjust="spacingAndGlyphs">o</text></g><g font-family="Liberation Sans" font-size="14.6" font-weight="400" fill="#2b2b2b" stroke="#2b2b2b" stroke-width="0.1"><text x="142.30" y="292.55" textLength="8.50" lengthAdjust="spacingAndGlyphs">C</text><text x="150.80" y="292.55" textLength="3.66" lengthAdjust="spacingAndGlyphs">l</text><text x="154.46" y="292.55" textLength="8.40" lengthAdjust="spacingAndGlyphs">o</text><text x="162.86" y="292.55" textLength="5.34" lengthAdjust="spacingAndGlyphs">t</text><text x="168.20" y="292.55" textLength="8.37" lengthAdjust="spacingAndGlyphs">h</text><text x="176.57" y="292.55" textLength="3.66" lengthAdjust="spacingAndGlyphs">i</text><text x="180.23" y="292.55" textLength="8.37" lengthAdjust="spacingAndGlyphs">n</text><text x="188.60" y="292.55" textLength="7.50" lengthAdjust="spacingAndGlyphs">g</text></g><g font-family="Liberation Sans" font-size="14.6" font-weight="400" fill="#2b2b2b" stroke="#2b2b2b" stroke-width="0.1"><text x="236.90" y="292.55" textLength="7.77" lengthAdjust="spacingAndGlyphs">T</text><text x="244.67" y="292.55" textLength="8.08" lengthAdjust="spacingAndGlyphs">6</text><text x="252.74" y="292.55" textLength="8.08" lengthAdjust="spacingAndGlyphs">5</text><text x="260.82" y="292.55" textLength="8.08" lengthAdjust="spacingAndGlyphs">7</text><text x="268.90" y="292.55" textLength="8.08" lengthAdjust="spacingAndGlyphs">9</text></g><text x="361.25" y="292.55" font-family="Liberation Sans" font-size="14.6" font-weight="400" fill="#2b2b2b" text-anchor="start" textLength="8.08" lengthAdjust="spacingAndGlyphs">$</text><g font-family="Liberation Sans" font-size="14.6" font-weight="400" fill="#2b2b2b" stroke="#2b2b2b" stroke-width="0.1"><text x="368.03" y="292.55" textLength="8.08" lengthAdjust="spacingAndGlyphs">3</text><text x="376.11" y="292.55" textLength="8.08" lengthAdjust="spacingAndGlyphs">6</text><text x="384.19" y="292.55" textLength="3.98" lengthAdjust="spacingAndGlyphs">,</text><text x="388.17" y="292.55" textLength="8.08" lengthAdjust="spacingAndGlyphs">0</text><text x="396.24" y="292.55" textLength="8.08" lengthAdjust="spacingAndGlyphs">0</text><text x="404.32" y="292.55" textLength="8.08" lengthAdjust="spacingAndGlyphs">0</text></g><g font-family="Liberation Sans" font-size="14.6" font-weight="400" fill="#2b2b2b" stroke="#2b2b2b" stroke-width="0.1"><text x="465.93" y="292.55" textLength="8.08" lengthAdjust="spacingAndGlyphs">4</text><text x="474.01" y="292.55" textLength="11.39" lengthAdjust="spacingAndGlyphs">%</text></g><g font-family="Liberation Sans" font-size="14.6" font-weight="400" fill="#2b2b2b" stroke="#2b2b2b" stroke-width="0.1"><text x="41.20" y="357.80" textLength="6.70" lengthAdjust="spacingAndGlyphs">L</text><text x="47.90" y="357.80" textLength="8.40" lengthAdjust="spacingAndGlyphs">o</text><text x="56.30" y="357.80" textLength="8.40" lengthAdjust="spacingAndGlyphs">o</text><text x="64.71" y="357.80" textLength="7.25" lengthAdjust="spacingAndGlyphs">k</text><text x="75.56" y="357.80" textLength="8.37" lengthAdjust="spacingAndGlyphs">u</text><text x="83.93" y="357.80" textLength="8.37" lengthAdjust="spacingAndGlyphs">p</text><text x="95.91" y="357.80" textLength="6.74" lengthAdjust="spacingAndGlyphs">c</text><text x="102.65" y="357.80" textLength="8.40" lengthAdjust="spacingAndGlyphs">o</text><text x="111.05" y="357.80" textLength="8.37" lengthAdjust="spacingAndGlyphs">d</text><text x="119.42" y="357.80" textLength="7.93" lengthAdjust="spacingAndGlyphs">e</text><text x="127.35" y="357.80" textLength="4.26" lengthAdjust="spacingAndGlyphs">:</text></g><g font-family="Liberation Sans" font-size="14.6" font-weight="400" fill="#2b2b2b" stroke="#2b2b2b" stroke-width="0.1"><text x="191.02" y="357.80" textLength="8.67" lengthAdjust="spacingAndGlyphs">B</text><text x="199.69" y="357.80" textLength="8.08" lengthAdjust="spacingAndGlyphs">9</text><text x="207.77" y="357.80" textLength="8.08" lengthAdjust="spacingAndGlyphs">0</text><text x="215.84" y="357.80" textLength="8.08" lengthAdjust="spacingAndGlyphs">5</text><text x="223.92" y="357.80" textLength="8.08" lengthAdjust="spacingAndGlyphs">4</text></g><g font-family="Liberation Sans" font-size="14.6" font-weight="400" fill="#2b2b2b" stroke="#2b2b2b" stroke-width="0.1"><text x="41.20" y="379.55" textLength="7.32" lengthAdjust="spacingAndGlyphs">S</text><text x="48.52" y="379.55" textLength="8.37" lengthAdjust="spacingAndGlyphs">u</text><text x="56.90" y="379.55" textLength="8.37" lengthAdjust="spacingAndGlyphs">p</text><text x="65.27" y="379.55" textLength="8.37" lengthAdjust="spacingAndGlyphs">p</text><text x="73.64" y="379.55" textLength="3.66" lengthAdjust="spacingAndGlyphs">l</text><text x="77.30" y="379.55" textLength="3.66" lengthAdjust="spacingAndGlyphs">i</text><text x="80.96" y="379.55" textLength="7.93" lengthAdjust="spacingAndGlyphs">e</text><text x="88.89" y="379.55" textLength="5.56" lengthAdjust="spacingAndGlyphs">r</text><text x="94.44" y="379.55" textLength="4.26" lengthAdjust="spacingAndGlyphs">:</text></g><g font-family="Liberation Sans" font-size="14.6" font-weight="400" fill="#2b2b2b" stroke="#2b2b2b" stroke-width="0.1"><text x="194.34" y="379.55" textLength="7.32" lengthAdjust="spacingAndGlyphs">S</text><text x="201.67" y="379.55" textLength="3.66" lengthAdjust="spacingAndGlyphs">i</text><text x="205.32" y="379.55" textLength="7.93" lengthAdjust="spacingAndGlyphs">e</text><text x="213.25" y="379.55" textLength="5.56" lengthAdjust="spacingAndGlyphs">r</text><text x="218.81" y="379.55" textLength="5.56" lengthAdjust="spacingAndGlyphs">r</text><text x="224.37" y="379.55" textLength="7.63" lengthAdjust="spacingAndGlyphs">a</text></g><g font-family="Liberation Sans" font-size="14.6" font-weight="400" fill="#2b2b2b" stroke="#2b2b2b" stroke-width="0.1"><text x="41.20" y="401.30" textLength="7.32" lengthAdjust="spacingAndGlyphs">S</text><text x="48.52" y="401.30" textLength="7.63" lengthAdjust="spacingAndGlyphs">a</text><text x="56.16" y="401.30" textLength="3.66" lengthAdjust="spacingAndGlyphs">l</text><text x="59.81" y="401.30" textLength="7.93" lengthAdjust="spacingAndGlyphs">e</text><text x="67.74" y="401.30" textLength="6.23" lengthAdjust="spacingAndGlyphs">s</text><text x="73.98" y="401.30" textLength="4.26" lengthAdjust="spacingAndGlyphs">:</text></g><text x="146.80" y="401.30" font-family="Liberation Sans" font-size="14.6" font-weight="400" fill="#2b2b2b" text-anchor="start" textLength="8.08" lengthAdjust="spacingAndGlyphs">$</text><g font-family="Liberation Sans" font-size="14.6" font-weight="400" fill="#2b2b2b" stroke="#2b2b2b" stroke-width="0.1"><text x="171.73" y="401.30" textLength="8.08" lengthAdjust="spacingAndGlyphs">3</text><text x="179.81" y="401.30" textLength="3.98" lengthAdjust="spacingAndGlyphs">,</text><text x="183.79" y="401.30" textLength="8.08" lengthAdjust="spacingAndGlyphs">4</text><text x="191.87" y="401.30" textLength="8.08" lengthAdjust="spacingAndGlyphs">0</text><text x="199.94" y="401.30" textLength="8.08" lengthAdjust="spacingAndGlyphs">0</text><text x="208.02" y="401.30" textLength="4.02" lengthAdjust="spacingAndGlyphs">.</text><text x="212.04" y="401.30" textLength="8.08" lengthAdjust="spacingAndGlyphs">0</text><text x="220.12" y="401.30" textLength="8.08" lengthAdjust="spacingAndGlyphs">0</text></g><text x="88.95" y="51.80" font-family="Liberation Sans" font-size="14.6" font-weight="400" fill="#767676" text-anchor="middle" textLength="9.22" lengthAdjust="spacingAndGlyphs">A</text><text x="186.80" y="51.90" font-family="Liberation Sans" font-size="14.6" font-weight="700" fill="#217346" text-anchor="middle" textLength="8.93" lengthAdjust="spacingAndGlyphs">B</text><text x="293.93" y="51.80" font-family="Liberation Sans" font-size="14.6" font-weight="400" fill="#767676" text-anchor="middle" textLength="8.50" lengthAdjust="spacingAndGlyphs">C</text><text x="386.38" y="51.80" font-family="Liberation Sans" font-size="14.6" font-weight="400" fill="#767676" text-anchor="middle" textLength="9.81" lengthAdjust="spacingAndGlyphs">D</text><text x="453.25" y="51.80" font-family="Liberation Sans" font-size="14.6" font-weight="400" fill="#767676" text-anchor="middle" textLength="7.78" lengthAdjust="spacingAndGlyphs">E</text><text x="522.30" y="51.80" font-family="Liberation Sans" font-size="14.6" font-weight="400" fill="#767676" text-anchor="middle" textLength="7.32" lengthAdjust="spacingAndGlyphs">F</text><text x="591.90" y="51.80" font-family="Liberation Sans" font-size="14.6" font-weight="400" fill="#767676" text-anchor="middle" textLength="10.05" lengthAdjust="spacingAndGlyphs">G</text><text x="661.50" y="51.80" font-family="Liberation Sans" font-size="14.6" font-weight="400" fill="#767676" text-anchor="middle" textLength="9.93" lengthAdjust="spacingAndGlyphs">H</text><text x="18.00" y="75.05" font-family="Liberation Sans" font-size="14.6" font-weight="400" fill="#767676" text-anchor="middle" textLength="8.08" lengthAdjust="spacingAndGlyphs">1</text><text x="18.00" y="96.80" font-family="Liberation Sans" font-size="14.6" font-weight="400" fill="#767676" text-anchor="middle" textLength="8.08" lengthAdjust="spacingAndGlyphs">2</text><text x="18.00" y="118.55" font-family="Liberation Sans" font-size="14.6" font-weight="400" fill="#767676" text-anchor="middle" textLength="8.08" lengthAdjust="spacingAndGlyphs">3</text><text x="18.00" y="140.30" font-family="Liberation Sans" font-size="14.6" font-weight="400" fill="#767676" text-anchor="middle" textLength="8.08" lengthAdjust="spacingAndGlyphs">4</text><text x="18.00" y="162.05" font-family="Liberation Sans" font-size="14.6" font-weight="400" fill="#767676" text-anchor="middle" textLength="8.08" lengthAdjust="spacingAndGlyphs">5</text><text x="18.00" y="183.80" font-family="Liberation Sans" font-size="14.6" font-weight="400" fill="#767676" text-anchor="middle" textLength="8.08" lengthAdjust="spacingAndGlyphs">6</text><text x="18.00" y="205.55" font-family="Liberation Sans" font-size="14.6" font-weight="400" fill="#767676" text-anchor="middle" textLength="8.08" lengthAdjust="spacingAndGlyphs">7</text><text x="18.00" y="227.30" font-family="Liberation Sans" font-size="14.6" font-weight="400" fill="#767676" text-anchor="middle" textLength="8.08" lengthAdjust="spacingAndGlyphs">8</text><text x="18.00" y="249.05" font-family="Liberation Sans" font-size="14.6" font-weight="400" fill="#767676" text-anchor="middle" textLength="8.08" lengthAdjust="spacingAndGlyphs">9</text><g font-family="Liberation Sans" font-size="14.6" font-weight="400" fill="#767676" stroke="#767676" stroke-width="0.2"><text x="9.92" y="270.80" textLength="8.08" lengthAdjust="spacingAndGlyphs">1</text><text x="18.00" y="270.80" textLength="8.08" lengthAdjust="spacingAndGlyphs">0</text></g><g font-family="Liberation Sans" font-size="14.6" font-weight="400" fill="#767676" stroke="#767676" stroke-width="0.2"><text x="9.92" y="292.55" textLength="8.08" lengthAdjust="spacingAndGlyphs">1</text><text x="18.00" y="292.55" textLength="8.08" lengthAdjust="spacingAndGlyphs">1</text></g><g font-family="Liberation Sans" font-size="14.6" font-weight="400" fill="#767676" stroke="#767676" stroke-width="0.2"><text x="9.92" y="314.30" textLength="8.08" lengthAdjust="spacingAndGlyphs">1</text><text x="18.00" y="314.30" textLength="8.08" lengthAdjust="spacingAndGlyphs">2</text></g><g font-family="Liberation Sans" font-size="14.6" font-weight="400" fill="#767676" stroke="#767676" stroke-width="0.2"><text x="9.92" y="336.05" textLength="8.08" lengthAdjust="spacingAndGlyphs">1</text><text x="18.00" y="336.05" textLength="8.08" lengthAdjust="spacingAndGlyphs">3</text></g><g font-family="Liberation Sans" font-size="14.6" font-weight="400" fill="#767676" stroke="#767676" stroke-width="0.2"><text x="9.92" y="357.80" textLength="8.08" lengthAdjust="spacingAndGlyphs">1</text><text x="18.00" y="357.80" textLength="8.08" lengthAdjust="spacingAndGlyphs">4</text></g><g font-family="Liberation Sans" font-size="14.6" font-weight="700" fill="#217346"><text x="10.02" y="379.55" textLength="8.08" lengthAdjust="spacingAndGlyphs">1</text><text x="18.10" y="379.55" textLength="8.08" lengthAdjust="spacingAndGlyphs">5</text></g><g font-family="Liberation Sans" font-size="14.6" font-weight="400" fill="#767676" stroke="#767676" stroke-width="0.2"><text x="9.92" y="401.30" textLength="8.08" lengthAdjust="spacingAndGlyphs">1</text><text x="18.00" y="401.30" textLength="8.08" lengthAdjust="spacingAndGlyphs">6</text></g><g font-family="Liberation Sans" font-size="14.6" font-weight="400" fill="#767676" stroke="#767676" stroke-width="0.2"><text x="9.92" y="423.05" textLength="8.08" lengthAdjust="spacingAndGlyphs">1</text><text x="18.00" y="423.05" textLength="8.08" lengthAdjust="spacingAndGlyphs">7</text></g><g font-family="Liberation Sans" font-size="14.6" font-weight="400" fill="#767676" stroke="#767676" stroke-width="0.2"><text x="9.92" y="444.80" textLength="8.08" lengthAdjust="spacingAndGlyphs">1</text><text x="18.00" y="444.80" textLength="8.08" lengthAdjust="spacingAndGlyphs">8</text></g><g font-family="Liberation Sans" font-size="14.6" font-weight="400" fill="#767676" stroke="#767676" stroke-width="0.2"><text x="9.92" y="466.55" textLength="8.08" lengthAdjust="spacingAndGlyphs">1</text><text x="18.00" y="466.55" textLength="8.08" lengthAdjust="spacingAndGlyphs">9</text></g><g font-family="Liberation Sans" font-size="14.3" font-weight="400" fill="#505050"><text x="6.60" y="22.30" textLength="8.67" lengthAdjust="spacingAndGlyphs">B</text><text x="15.27" y="22.30" textLength="8.08" lengthAdjust="spacingAndGlyphs">1</text><text x="23.35" y="22.30" textLength="8.08" lengthAdjust="spacingAndGlyphs">5</text></g><g font-family="Liberation Sans" font-size="13.6" font-weight="400" fill="#3a3a3a"><text x="179.30" y="23.60" textLength="7.94" lengthAdjust="spacingAndGlyphs">=</text><text x="187.24" y="23.60" textLength="8.27" lengthAdjust="spacingAndGlyphs">X</text><text x="195.51" y="23.60" textLength="6.70" lengthAdjust="spacingAndGlyphs">L</text><text x="202.21" y="23.60" textLength="10.55" lengthAdjust="spacingAndGlyphs">O</text><text x="212.76" y="23.60" textLength="10.55" lengthAdjust="spacingAndGlyphs">O</text><text x="223.31" y="23.60" textLength="8.28" lengthAdjust="spacingAndGlyphs">K</text><text x="231.59" y="23.60" textLength="10.23" lengthAdjust="spacingAndGlyphs">U</text><text x="241.82" y="23.60" textLength="8.23" lengthAdjust="spacingAndGlyphs">P</text><text x="250.05" y="23.60" textLength="4.83" lengthAdjust="spacingAndGlyphs">(</text><text x="254.89" y="23.60" textLength="8.67" lengthAdjust="spacingAndGlyphs">B</text><text x="263.56" y="23.60" textLength="8.08" lengthAdjust="spacingAndGlyphs">1</text><text x="271.63" y="23.60" textLength="8.08" lengthAdjust="spacingAndGlyphs">4</text><text x="279.71" y="23.60" textLength="3.98" lengthAdjust="spacingAndGlyphs">,</text><text x="283.69" y="23.60" textLength="8.50" lengthAdjust="spacingAndGlyphs">C</text><text x="292.19" y="23.60" textLength="8.08" lengthAdjust="spacingAndGlyphs">2</text><text x="300.26" y="23.60" textLength="4.26" lengthAdjust="spacingAndGlyphs">:</text><text x="304.53" y="23.60" textLength="8.50" lengthAdjust="spacingAndGlyphs">C</text><text x="313.03" y="23.60" textLength="8.08" lengthAdjust="spacingAndGlyphs">1</text><text x="321.10" y="23.60" textLength="8.08" lengthAdjust="spacingAndGlyphs">1</text><text x="329.18" y="23.60" textLength="3.98" lengthAdjust="spacingAndGlyphs">,</text><text x="333.16" y="23.60" textLength="9.22" lengthAdjust="spacingAndGlyphs">A</text><text x="342.38" y="23.60" textLength="8.08" lengthAdjust="spacingAndGlyphs">2</text><text x="350.46" y="23.60" textLength="4.26" lengthAdjust="spacingAndGlyphs">:</text><text x="354.72" y="23.60" textLength="9.22" lengthAdjust="spacingAndGlyphs">A</text><text x="363.94" y="23.60" textLength="8.08" lengthAdjust="spacingAndGlyphs">1</text><text x="372.02" y="23.60" textLength="8.08" lengthAdjust="spacingAndGlyphs">1</text><text x="380.10" y="23.60" textLength="3.98" lengthAdjust="spacingAndGlyphs">,</text><text x="384.08" y="23.60" textLength="6.39" lengthAdjust="spacingAndGlyphs">&quot;</text><text x="390.46" y="23.60" textLength="8.23" lengthAdjust="spacingAndGlyphs">P</text><text x="398.70" y="23.60" textLength="5.56" lengthAdjust="spacingAndGlyphs">r</text><text x="404.25" y="23.60" textLength="8.40" lengthAdjust="spacingAndGlyphs">o</text><text x="412.66" y="23.60" textLength="8.37" lengthAdjust="spacingAndGlyphs">d</text><text x="421.03" y="23.60" textLength="8.37" lengthAdjust="spacingAndGlyphs">u</text><text x="429.41" y="23.60" textLength="6.74" lengthAdjust="spacingAndGlyphs">c</text><text x="436.14" y="23.60" textLength="5.34" lengthAdjust="spacingAndGlyphs">t</text><text x="445.09" y="23.60" textLength="6.74" lengthAdjust="spacingAndGlyphs">c</text><text x="451.83" y="23.60" textLength="8.40" lengthAdjust="spacingAndGlyphs">o</text><text x="460.23" y="23.60" textLength="8.37" lengthAdjust="spacingAndGlyphs">d</text><text x="468.60" y="23.60" textLength="7.93" lengthAdjust="spacingAndGlyphs">e</text><text x="480.14" y="23.60" textLength="8.37" lengthAdjust="spacingAndGlyphs">n</text><text x="488.51" y="23.60" textLength="8.40" lengthAdjust="spacingAndGlyphs">o</text><text x="496.91" y="23.60" textLength="5.34" lengthAdjust="spacingAndGlyphs">t</text><text x="505.86" y="23.60" textLength="4.86" lengthAdjust="spacingAndGlyphs">f</text><text x="510.72" y="23.60" textLength="8.40" lengthAdjust="spacingAndGlyphs">o</text><text x="519.12" y="23.60" textLength="8.37" lengthAdjust="spacingAndGlyphs">u</text><text x="527.50" y="23.60" textLength="8.37" lengthAdjust="spacingAndGlyphs">n</text><text x="535.87" y="23.60" textLength="8.37" lengthAdjust="spacingAndGlyphs">d</text><text x="544.24" y="23.60" textLength="6.39" lengthAdjust="spacingAndGlyphs">&quot;</text><text x="550.63" y="23.60" textLength="3.98" lengthAdjust="spacingAndGlyphs">,</text><text x="554.61" y="23.60" textLength="8.08" lengthAdjust="spacingAndGlyphs">0</text><text x="562.69" y="23.60" textLength="4.83" lengthAdjust="spacingAndGlyphs">)</text></g><g fill="none" stroke="#505050" stroke-linecap="round"><path d="M150.9 24.2 C152.0 24.9 153.1 24.2 153.6 22.6 L156.4 13.4 C157.0 11.4 158.4 10.6 160.6 11.3" stroke-width="1.45"/><path d="M153.9 14.6 L158.7 14.6" stroke-width="1.0"/><path d="M157.9 16.9 C159.3 16.2 160.0 17.2 160.4 19.3 C160.8 21.5 161.4 22.9 163.1 22.0" stroke-width="1.1"/><path d="M163.0 16.7 L158.0 22.5" stroke-width="1.0"/></g></svg>
</body></html>
